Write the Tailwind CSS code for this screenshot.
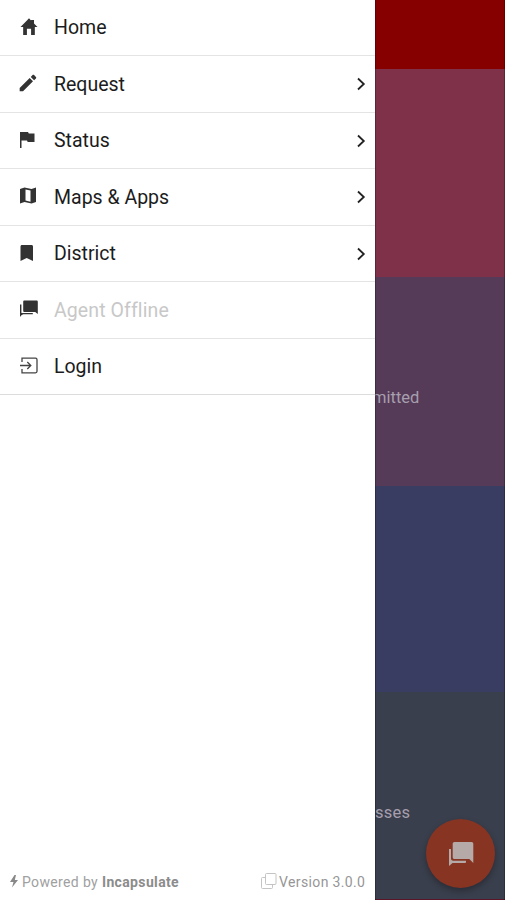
<!DOCTYPE html>
<html lang="en">
<head>
<meta charset="utf-8">
<title>Menu</title>
<script src="https://cdn.jsdelivr.net/npm/@tailwindcss/browser@4"></script>
</head>
<body class="bg-white">
<div class="flex h-[900px] w-[506px] overflow-hidden bg-white font-[Roboto,sans-serif]">
  <aside class="flex w-[375px] shrink-0 flex-col justify-between bg-white">
    <nav class="text-[19.5px] text-[#1c1c1c]">
      <a class="flex h-[56px] items-center border-b border-[#e4e4e4] pl-[19px] pr-[9px]">
        <svg class="mr-[15px] mb-[2px] h-5 w-5" viewBox="0 0 24 24" fill="#333"><path d="M5 21.500V12H1.800L9.500 4.200 12 1.500l2.500 2.700V3.500H18v4.200L22.200 12H19v9.500h-4.500V14h-5v7.500z"/></svg>
        <span>Home</span>
      </a>
      <a class="flex h-[57px] items-center border-b border-[#e4e4e4] pl-[18px] pr-[9px] pt-px">
        <svg class="mr-[16px] mb-[3px] h-5 w-5" viewBox="0 0 24 24" fill="#333"><path d="M2 18v4h4L18 10l-4-4zM21.500 6.500c.6-.6.6-1.200 0-1.800l-2.200-2.200c-.6-.6-1.200-.6-1.800 0L15.300 4.700l4 4z"/></svg>
        <span class="flex-1">Request</span>
        <svg class="mb-[2px] h-[14px] w-[9px]" viewBox="0 0 9 14" fill="none" stroke="#222" stroke-width="1.800"><path d="M1 1.500 6.800 7 1 12.500"/></svg>
      </a>
      <a class="flex h-[56px] items-center border-b border-[#e4e4e4] pl-[18px] pr-[9px]">
        <svg class="mr-[16px] mb-[2px] h-5 w-5" viewBox="0 0 20 20" fill="#333"><path d="M2 2h8l.8 1.500H16.500V12H9.700L9 10.500H3.500V18H2z"/></svg>
        <span class="flex-1">Status</span>
        <svg class="h-[14px] w-[9px]" viewBox="0 0 9 14" fill="none" stroke="#222" stroke-width="1.800"><path d="M1 1.500 6.800 7 1 12.500"/></svg>
      </a>
      <a class="flex h-[57px] items-center border-b border-[#e4e4e4] pl-[18px] pr-[9px] pt-px">
        <svg class="mr-[16px] mb-[3px] h-5 w-5" viewBox="0 0 20 20" fill="#333" fill-rule="evenodd"><path d="M2 3 6.500 1.500l7 1.500L18 1.500v14.400L13.500 17.500l-7-1.500L2 17.500zM7.500 3.500v11l5 1.200V4.600z"/></svg>
        <span class="flex-1">Maps &amp; Apps</span>
        <svg class="mb-[2px] h-[14px] w-[9px]" viewBox="0 0 9 14" fill="none" stroke="#222" stroke-width="1.800"><path d="M1 1.500 6.800 7 1 12.500"/></svg>
      </a>
      <a class="flex h-[56px] items-center border-b border-[#e4e4e4] pl-[18px] pr-[9px] pt-px">
        <svg class="mr-[16px] mb-px h-5 w-5" viewBox="0 0 20 20" fill="#333"><path d="M4 1h9.500c.9 0 1.500.6 1.500 1.500V17l-6.300-3L2.500 17V2.500C2.500 1.600 3.100 1 4 1z"/></svg>
        <span class="flex-1">District</span>
        <svg class="h-[14px] w-[9px]" viewBox="0 0 9 14" fill="none" stroke="#222" stroke-width="1.800"><path d="M1 1.500 6.800 7 1 12.500"/></svg>
      </a>
      <a class="flex h-[57px] items-center border-b border-[#e4e4e4] pl-[18px] pr-[9px] pt-px text-[#c8c8c8]">
        <svg class="mr-[16px] mb-[3px] h-5 w-5" viewBox="0 0 20 20" fill="#333"><path d="M6.500 1.500h12c.8 0 1.300.5 1.300 1.300V15l-2.600-2H6.500c-.8 0-1.300-.5-1.300-1.300v-9c0-.7.5-1.200 1.300-1.200z"/><path d="M2.700 5.500v10.200L5 14.600h9.800" fill="none" stroke="#333" stroke-width="1.400"/><path d="M2 14h3l-3 4z"/></svg>
        <span class="tracking-[0.1px] [font-variant-ligatures:normal]">Agent Offline</span>
      </a>
      <a class="flex h-[56px] items-center border-b border-[#dcdcdc] pl-[19px] pr-[9px]">
        <svg class="mr-[15px] mb-[2px] h-5 w-5" viewBox="0 0 20 20" fill="none" stroke="#444" stroke-width="1.300"><path d="M3 6V2.200h13.500c.9 0 1.500.6 1.500 1.500v11.600c0 .9-.6 1.500-1.500 1.500H3V13M1 9.500h10.500M8.300 6l3.500 3.500L8.300 13"/></svg>
        <span>Login</span>
      </a>
    </nav>
    <footer class="flex h-[36px] items-center pl-[8px] pr-[10px] text-[14px] text-[#a0a0a0]">
      <svg class="mr-[2px] mb-[2px] h-[15px] w-3" viewBox="0 0 12 15" fill="#888"><path d="M6.500 1 2 8h3.500L4 13.500 10 6H6.800L8 1z"/></svg>
      <span class="flex-1 tracking-[0.36px]">Powered by <b class="font-bold text-[#8c8c8c]">Incapsulate</b></span>
      <svg class="mr-[2px] mb-[2px] h-4 w-4" viewBox="0 0 16 16" fill="none" stroke="#c4c4c4"><rect x="4.500" y=".5" width="10.500" height="11" rx="1"/><path d="M4.500 4.500h-3a1 1 0 0 0-1 1v9a1 1 0 0 0 1 1h9a1 1 0 0 0 1-1v-3"/></svg>
      <span class="-mr-[0.36px] tracking-[0.36px] text-[#969696]">Version 3.0.0</span>
    </footer>
  </aside>
  <main class="relative flex w-[130px] shrink-0 flex-col overflow-hidden bg-[#4a3345] text-[16.5px] text-[#a79fae]">
    <div class="h-[69px] shrink-0 bg-[#870000]"></div>
    <div class="h-[208px] shrink-0 bg-[#7e3148]"></div>
    <div class="h-[209px] shrink-0 bg-[#553b58] pt-[109px]"><span class="-ml-[3px] block leading-6">mitted</span></div>
    <div class="h-[206px] shrink-0 bg-[#393d62]"></div>
    <div class="h-[207px] shrink-0 bg-[#3a3f4d] pt-[109px]"><span class="block leading-6 tracking-[0.2px]">sses</span></div>
    <div class="h-px shrink-0 bg-[#5b1527]"></div>
    <div class="pointer-events-none absolute inset-0 border-x border-black/25"></div>
    <button class="absolute left-[51px] top-[819px] flex h-[69px] w-[69px] items-center justify-center rounded-full bg-[#873423] shadow-[0_3px_6px_rgba(0,0,0,0.3)]">
      <svg class="h-[26px] w-[26px]" viewBox="0 0 26 26" fill="#b5aaa8"><path d="M6.500 1h17c1 0 1.800.8 1.800 1.800V22l-4-4H6.500c-1 0-1.800-.8-1.800-1.800V2.800C4.700 1.800 5.500 1 6.500 1z"/><path d="M1 8h2v9.500c0 1.400.8 2.200 2.200 2.200H18v1.500c0 .5-.4.800-.9.800H4.500L1 25z"/></svg>
    </button>
  </main>
</div>
</body>
</html>
